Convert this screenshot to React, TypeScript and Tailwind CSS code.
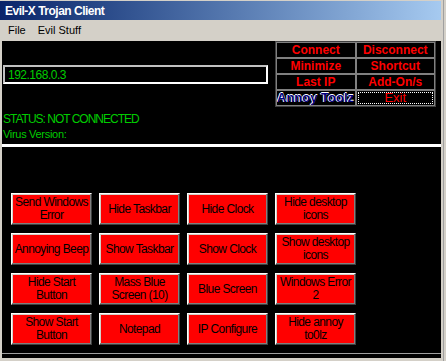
const topButtons = [
    { label: 'Connect', kind: 'red' },
    { label: 'Disconnect', kind: 'red' },
    { label: 'Minimize', kind: 'red' },
    { label: 'Shortcut', kind: 'red' },
    { label: 'Last IP', kind: 'red' },
    { label: 'Add-On/s', kind: 'red' },
    { label: 'Annoy Toolz', kind: 'annoy' },
    { label: 'Exit', kind: 'exit' },
];

// 4 x 4 grid of the evil buttons
const evilButtons = [
    ['Send Windows', 'Error'],
    ['Hide Taskbar'],
    ['Hide Clock'],
    ['Hide desktop', 'icons'],
    ['Annoying Beep'],
    ['Show Taskbar'],
    ['Show Clock'],
    ['Show desktop', 'icons'],
    ['Hide Start', 'Button'],
    ['Mass Blue', 'Screen (10)'],
    ['Blue Screen'],
    ['Windows Error', '2'],
    ['Show Start', 'Button'],
    ['Notepad'],
    ['IP Configure'],
    ['Hide annoy', 'to0lz'],
];

function TopButton({ label, kind }: { label: string; kind: string }) {
    if (kind === 'annoy') {
        return (
            <div className="flex h-[16px] items-center overflow-hidden border border-[#808080] bg-black">
                <span className="whitespace-nowrap text-[13px] font-bold leading-[14px] text-[#000080] [text-shadow:-1px_0_0_#fff,0_-1px_0_#fff]">
                    {label}
                </span>
            </div>
        );
    }
    if (kind === 'exit') {
        return (
            <div className="flex h-[16px] border border-[#808080] bg-black p-px">
                <div className="flex flex-1 items-center justify-center border border-dotted border-white text-[13px] leading-[12px] text-[#ff0000]">
                    {label}
                </div>
            </div>
        );
    }
    return (
        <div className="flex h-[16px] items-center justify-center border border-[#808080] bg-black text-[12px] font-bold leading-[14px] text-[#ff0000]">
            {label}
        </div>
    );
}

export default function App() {
    return (
        <div className="flex h-[361px] w-[446px] bg-[#d4d0c8] font-['Liberation_Sans',Arial,sans-serif]">
            <div className="flex w-[441px] flex-col pb-[3px] pt-px">
                {/* title bar */}
                <div className="flex h-[19px] items-center bg-linear-to-r from-[#0a246a] to-[#a6caf0] pl-[5px] text-[12px] font-bold tracking-[-0.5px] text-white">
                    Evil-X Trojan Client
                </div>
                {/* menu */}
                <div className="flex h-[21px] items-center gap-[12px] pl-[8px] text-[11px] text-black">
                    <span>File</span>
                    <span>Evil Stuff</span>
                </div>

                <div className="flex flex-1 flex-col border-l-2 border-[#d4d0c8] bg-black">
                    {/* top section */}
                    <div className="flex h-[103px]">
                        <div className="flex w-[272px] flex-col pl-px pt-[24px]">
                            <div className="flex h-[19px] w-[265px] items-center border-2 border-b-white border-l-[#c0c0c0] border-r-white border-t-[#c0c0c0] pl-[3px] text-[12px] tracking-[-0.5px] text-[#00cc00]">
                                192.168.0.3
                            </div>
                            <div className="mt-[28px] text-[12px] leading-[14px] tracking-[-1px] text-[#00cc00]">
                                STATUS: NOT CONNECTED
                            </div>
                            <div className="mt-[2px] text-[11px] leading-[13px] tracking-[-0.3px] text-[#00cc00]">
                                Virus Version:
                            </div>
                        </div>
                        <div className="ml-auto mr-[5px] grid h-[66px] w-[161px] grid-cols-2 border border-[#404040]">
                            {topButtons.map((b) => (
                                <TopButton key={b.label} label={b.label} kind={b.kind} />
                            ))}
                        </div>
                    </div>

                    <div className="h-[3px] bg-white" />

                    {/* evil stuff panel */}
                    <div className="flex-1 pl-[9px] pt-[46px]">
                        <div className="grid grid-cols-[repeat(4,81px)] gap-x-[7px] gap-y-[8px]">
                            {evilButtons.map((lines, i) => (
                                <div
                                    key={i}
                                    className="flex h-[32px] flex-col items-center justify-center border border-b-[#404040] border-l-white border-r-[#404040] border-t-white bg-[#ff0000] text-[12px] leading-[13px] tracking-[-0.6px] text-black shadow-[inset_-1px_-1px_0_#808080,inset_1px_1px_0_#d4d0c8]"
                                >
                                    {lines.map((l) => (
                                        <span key={l} className="whitespace-nowrap">
                                            {l}
                                        </span>
                                    ))}
                                </div>
                            ))}
                        </div>
                    </div>
                    <div className="h-px bg-[#a0a0a0]" />
                    <div className="h-[4px]" />
                </div>
            </div>
            <div className="w-[2px]" />
            <div className="w-px bg-[#a0a0a0]" />
        </div>
    );
}
